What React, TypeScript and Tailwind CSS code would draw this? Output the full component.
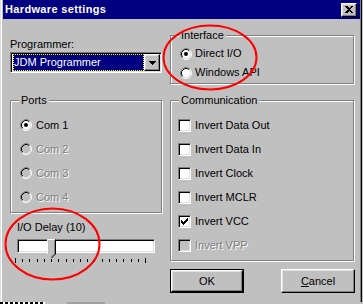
import React from 'react'

const font = "font-['Liberation_Sans',Arial,sans-serif]"
const disabledText = 'text-[#808080] [text-shadow:1px_1px_0_#fff]'

function Radio({ checked, disabled }: { checked?: boolean; disabled?: boolean }) {
  return (
    <svg width="12" height="12" viewBox="0 0 12 12" className="shrink-0">
      <circle cx="6" cy="6" r="4.5" fill={disabled ? '#c0c0c0' : '#fff'} />
      <path d="M2.11 9.89 A5.5 5.5 0 0 1 9.89 2.11" fill="none" stroke="#808080" />
      <path d="M9.89 2.11 A5.5 5.5 0 0 1 2.11 9.89" fill="none" stroke="#fff" />
      <path d="M2.82 9.18 A4.5 4.5 0 0 1 9.18 2.82" fill="none" stroke="#000" />
      <path d="M9.18 2.82 A4.5 4.5 0 0 1 2.82 9.18" fill="none" stroke="#dfdfdf" />
      {checked && <circle cx="6" cy="6" r="2" fill="#000" />}
    </svg>
  )
}

function Checkbox({ checked, disabled }: { checked?: boolean; disabled?: boolean }) {
  return (
    <div
      className={`w-[13px] h-[13px] shrink-0 flex items-center justify-center border border-t-[#808080] border-l-[#808080] border-r-white border-b-white shadow-[inset_1px_1px_0_#000,inset_-1px_-1px_0_#dfdfdf] ${
        disabled ? 'bg-[#c0c0c0]' : 'bg-white'
      }`}
    >
      {checked && (
        <svg width="7" height="7" viewBox="0 0 7 7" shapeRendering="crispEdges">
          <path d="M0 2 H1 V3 H2 V4 H3 V3 H4 V2 H5 V1 H6 V0 H7 V3 H6 V4 H5 V5 H4 V6 H3 V7 H2 V6 H1 V5 H0 Z" fill="#000" />
        </svg>
      )}
    </div>
  )
}

// etched group frame, caption sits over the top line
function Group({ label, className, children }: { label: string; className?: string; children: React.ReactNode }) {
  return (
    <div className={`relative border border-[#808080] shadow-[inset_1px_1px_0_#fff,1px_1px_0_#fff] ${className ?? ''}`}>
      <span className="absolute -top-[7px] left-[8px] px-[2px] bg-[#c0c0c0] leading-[13px]">{label}</span>
      {children}
    </div>
  )
}

const raised =
  'border border-t-white border-l-white border-r-black border-b-black shadow-[inset_-1px_-1px_0_#808080,inset_1px_1px_0_#dfdfdf] bg-[#c0c0c0]'

export default function App() {
  const ports = [
    { name: 'Com 1', checked: true, disabled: false },
    { name: 'Com 2', checked: false, disabled: true },
    { name: 'Com 3', checked: false, disabled: true },
    { name: 'Com 4', checked: false, disabled: true }
  ]
  const options = [
    { name: 'Invert Data Out', checked: false, disabled: false },
    { name: 'Invert Data In', checked: false, disabled: false },
    { name: 'Invert Clock', checked: false, disabled: false },
    { name: 'Invert MCLR', checked: false, disabled: false },
    { name: 'Invert VCC', checked: true, disabled: false },
    { name: 'Invert VPP', checked: false, disabled: true }
  ]
  const ticks = Array.from({ length: 19 }, (_, i) => i)

  return (
    <div className={`relative w-[363px] h-[304px] overflow-hidden bg-[#c0c0c0] text-[11px] leading-[13px] text-black ${font}`}>
      {/* window */}
      <div className="w-[362px] h-[302px] border-l border-l-[#dfdfdf] border-r border-r-black shadow-[inset_1px_0_0_#fff,inset_-1px_0_0_#808080] flex flex-col">
        {/* title bar */}
        <div className="h-[19px] ml-[2px] mr-[1px] bg-[#000080] flex items-center justify-between pl-[2px] pr-[3px]">
          <span className="text-white font-bold text-[11px] tracking-[0.35px]">Hardware settings</span>
          <div className={`w-[16px] h-[14px] flex items-center justify-center ${raised}`}>
            <svg width="8" height="7" viewBox="0 0 8 7" shapeRendering="crispEdges">
              <path d="M0 0 H2 L4 2 L6 0 H8 L5 3.5 L8 7 H6 L4 5 L2 7 H0 L3 3.5 Z" fill="#000" />
            </svg>
          </div>
        </div>

        {/* body */}
        <div className="flex gap-[8px] pl-[9px]">
          {/* left column */}
          <div className="w-[152px] flex flex-col">
            <div className="mt-[19px] h-[13px]">Programmer:</div>
            <div className="mt-[1px] h-[21px] w-[152px] bg-white flex border border-t-[#808080] border-l-[#808080] border-r-white border-b-white shadow-[inset_1px_1px_0_#000,inset_-1px_-1px_0_#dfdfdf] p-[1px] pl-[2px]">
              <div className="flex-1 bg-[#000080] text-white flex items-center pl-[1px] outline outline-1 outline-dotted outline-[#ffff00] -outline-offset-1">
                JDM Programmer
              </div>
              <div className={`w-[16px] flex items-center justify-center ${raised}`}>
                <svg width="7" height="4" viewBox="0 0 7 4" shapeRendering="crispEdges">
                  <path d="M0 0 H7 L3.5 4 Z" fill="#000" />
                </svg>
              </div>
            </div>

            <Group label="Ports" className="mt-[27px] h-[113px] pt-[12px] pl-[9px]">
              {ports.map((p) => (
                <div key={p.name} className="h-[24px] flex items-center gap-[4px]">
                  <Radio checked={p.checked} disabled={p.disabled} />
                  <span className={p.disabled ? disabledText : ''}>{p.name}</span>
                </div>
              ))}
            </Group>

            <div className="mt-[8px] h-[13px] pl-[7px]">I/O Delay (10)</div>
            <div className="relative mt-[5px] ml-[7px] w-[138px] h-[14px] bg-white border border-t-[#808080] border-l-[#808080] border-r-white border-b-white shadow-[inset_1px_1px_0_#000,inset_-1px_-1px_0_#dfdfdf]">
              <svg className="absolute left-[29px] -top-[1px]" width="9" height="20" viewBox="0 0 9 20">
                <path d="M0.5 0.5 H8.5 V15 L4.5 19 L0.5 15 Z" fill="#c0c0c0" />
                <path d="M0.5 15 V0.5 H8" fill="none" stroke="#fff" />
                <path d="M7.5 1.5 V14.6 L4.5 17.6" fill="none" stroke="#808080" />
                <path d="M8.5 0.5 V15 L4.5 19" fill="none" stroke="#000" />
              </svg>
            </div>
            <svg className="mt-[5px] ml-[5px]" width="140" height="6" viewBox="0 0 140 6" shapeRendering="crispEdges">
              {ticks.map((i) => {
                const x = Math.round(i * 7.22) + 0.5
                const end = i === 0 || i === 18
                return <line key={i} x1={x} x2={x} y1={end ? 0 : 1} y2={end ? 5 : 4} stroke="#000" />
              })}
            </svg>
          </div>

          {/* right column */}
          <div className="w-[185px] flex flex-col">
            <Group label="Interface" className="mt-[16px] h-[49px] w-[184px] pt-[8px] pl-[9px]">
              <div className="h-[19px] flex items-center gap-[3px]">
                <Radio checked />
                <span>Direct I/O</span>
              </div>
              <div className="h-[19px] flex items-center gap-[3px]">
                <Radio />
                <span>Windows API</span>
              </div>
            </Group>

            <Group label="Communication" className="mt-[16px] h-[161px] w-[184px] pt-[12px] pl-[7px]">
              {options.map((o) => (
                <div key={o.name} className="h-[24px] flex items-center gap-[4px]">
                  <Checkbox checked={o.checked} disabled={o.disabled} />
                  <span className={o.disabled ? disabledText : ''}>{o.name}</span>
                </div>
              ))}
            </Group>

            <div className="mt-[8px] flex justify-between">
              <div className="w-[74px] h-[24px] border border-black flex">
                <div className={`flex-1 flex items-center justify-center ${raised}`}>OK</div>
              </div>
              <div className={`w-[74px] h-[24px] flex items-center justify-center ${raised}`}>
                <span>
                  <span className="underline underline-offset-[1px]">C</span>ancel
                </span>
              </div>
            </div>
          </div>
        </div>
      </div>

      {/* strip of whatever sits below the window */}
      <div className="h-[2px] flex">
        <div className="w-[45px] bg-[repeating-linear-gradient(90deg,#000_0_3px,#fff_3px_5px)]" />
        <div className="w-[22px]" />
        <div className="w-[38px] bg-[#a0a0a0]" />
      </div>

      {/* red annotation circles */}
      <svg className="absolute inset-0 pointer-events-none" width="363" height="304" viewBox="0 0 363 304">
        <ellipse cx="210" cy="57.5" rx="46.5" ry="32" fill="none" stroke="#ff0000" strokeWidth="2" />
        <ellipse cx="52.5" cy="244" rx="47" ry="35.5" fill="none" stroke="#ff0000" strokeWidth="2" />
      </svg>
    </div>
  )
}
